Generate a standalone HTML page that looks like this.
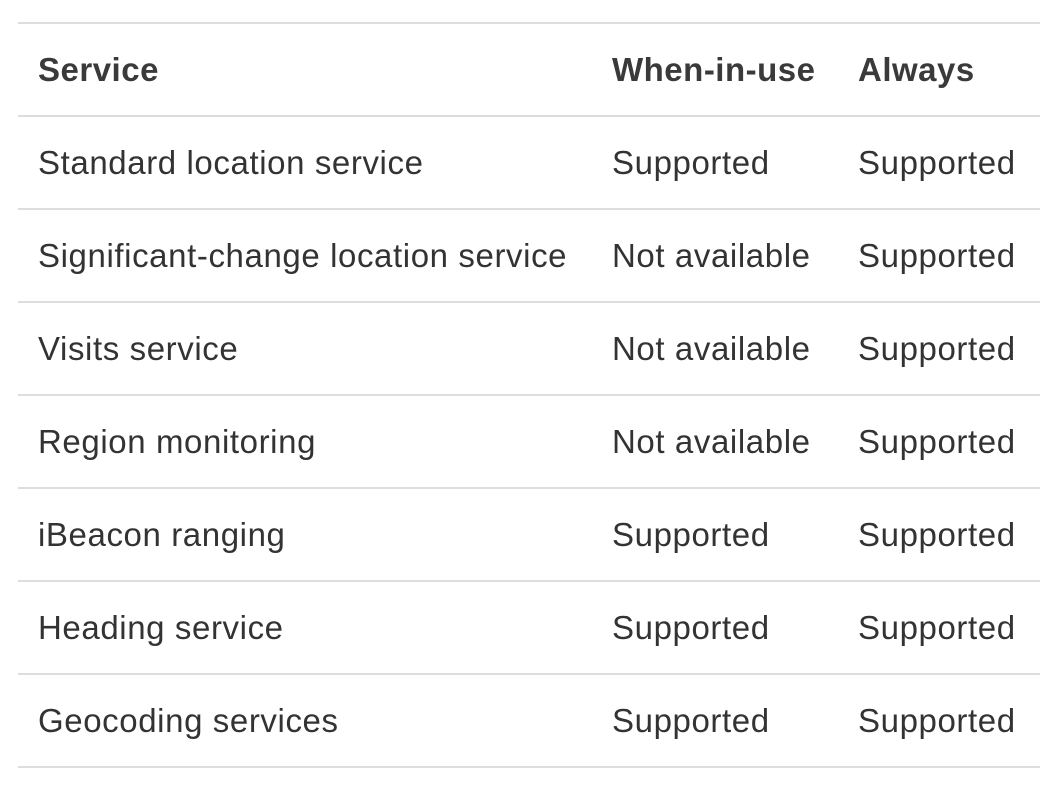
<!DOCTYPE html>
<html><head><meta charset="utf-8"><style>
html,body{margin:0;padding:0;background:#fff;width:1058px;height:788px;overflow:hidden}
body{font-family:"Liberation Sans",Arial,sans-serif;color:#333;font-size:33px}
.row{position:absolute;left:18px;width:1022px;height:93px;border-top:2px solid #ddd;box-sizing:border-box}
.row span{position:absolute;top:0;line-height:91px;white-space:nowrap;letter-spacing:0.6px}
.c1{left:20px}.c2{left:594px}.c3{left:840px}
.h span{font-weight:bold;color:#3a3a3a;letter-spacing:0.5px}
.last{position:absolute;left:18px;width:1022px;top:766px;border-top:2px solid #ddd}
</style></head><body>
<div class="row h" style="top:22px"><span class="c1">Service</span><span class="c2">When-in-use</span><span class="c3">Always</span></div>
<div class="row" style="top:115px"><span class="c1">Standard location service</span><span class="c2">Supported</span><span class="c3">Supported</span></div>
<div class="row" style="top:208px"><span class="c1">Significant-change location service</span><span class="c2">Not available</span><span class="c3">Supported</span></div>
<div class="row" style="top:301px"><span class="c1">Visits service</span><span class="c2">Not available</span><span class="c3">Supported</span></div>
<div class="row" style="top:394px"><span class="c1">Region monitoring</span><span class="c2">Not available</span><span class="c3">Supported</span></div>
<div class="row" style="top:487px"><span class="c1">iBeacon ranging</span><span class="c2">Supported</span><span class="c3">Supported</span></div>
<div class="row" style="top:580px"><span class="c1">Heading service</span><span class="c2">Supported</span><span class="c3">Supported</span></div>
<div class="row" style="top:673px"><span class="c1">Geocoding services</span><span class="c2">Supported</span><span class="c3">Supported</span></div>
<div class="last"></div>
</body></html>
